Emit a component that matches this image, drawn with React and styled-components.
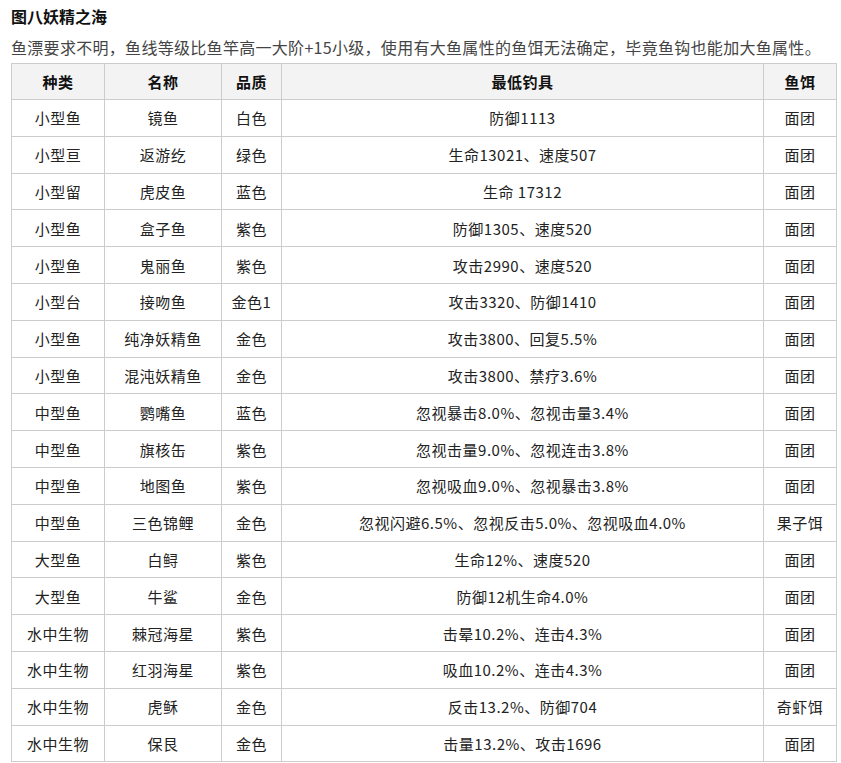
import React from "react";
import styled, { createGlobalStyle } from "styled-components";

const Global = createGlobalStyle`
  body { margin: 0; background: #fff; font-family: "Noto Sans CJK SC", "Noto Sans", sans-serif; color: #222; }
`;
const Wrap = styled.div`padding: 4px 5px 0 11px; width: 826px;`;
const Title = styled.h3`margin: 0; font-size: 16px; font-weight: 700; line-height: 24px; height: 24px; color:#111;`;
const Note = styled.p`margin: 8px 0 5px; font-size: 16px; letter-spacing: 0.3px; line-height: 22px; color: #444; white-space: nowrap;`;
const Table = styled.table`border-collapse: collapse; width: 826px; table-layout: fixed; font-size: 15px; letter-spacing: 0.5px;`;
const Th = styled.th`border: 1px solid #ccc; background: #f3f3f3; height: 35px; padding: 0; font-weight: 700; text-align: center; color:#111;`;
const Td = styled.td`border: 1px solid #ccc; height: 35.8px; padding: 0; text-align: center; white-space: nowrap;`;

const rows = [
  ["小型鱼","镜鱼","白色","防御1113","面团"],
  ["小型亘","返游纥","绿色","生命13021、速度507","面团"],
  ["小型留","虎皮鱼","蓝色","生命 17312","面团"],
  ["小型鱼","盒子鱼","紫色","防御1305、速度520","面团"],
  ["小型鱼","鬼丽鱼","紫色","攻击2990、速度520","面团"],
  ["小型台","接吻鱼","金色1","攻击3320、防御1410","面团"],
  ["小型鱼","纯净妖精鱼","金色","攻击3800、回复5.5%","面团"],
  ["小型鱼","混沌妖精鱼","金色","攻击3800、禁疗3.6%","面团"],
  ["中型鱼","鹦嘴鱼","蓝色","忽视暴击8.0%、忽视击量3.4%","面团"],
  ["中型鱼","旗核缶","紫色","忽视击量9.0%、忽视连击3.8%","面团"],
  ["中型鱼","地图鱼","紫色","忽视吸血9.0%、忽视暴击3.8%","面团"],
  ["中型鱼","三色锦鲤","金色","忽视闪避6.5%、忽视反击5.0%、忽视吸血4.0%","果子饵"],
  ["大型鱼","白鲟","紫色","生命12%、速度520","面团"],
  ["大型鱼","牛鲨","金色","防御12机生命4.0%","面团"],
  ["水中生物","棘冠海星","紫色","击晕10.2%、连击4.3%","面团"],
  ["水中生物","红羽海星","紫色","吸血10.2%、连击4.3%","面团"],
  ["水中生物","虎稣","金色","反击13.2%、防御704","奇虾饵"],
  ["水中生物","保艮","金色","击量13.2%、攻击1696","面团"],
];

export default function App() {
  return (
    <Wrap>
      <Global />
      <Title>图八妖精之海</Title>
      <Note>鱼漂要求不明，鱼线等级比鱼竿高一大阶+15小级，使用有大鱼属性的鱼饵无法确定，毕竟鱼钩也能加大鱼属性。</Note>
      <Table>
        <colgroup>
          <col style={{ width: 93 }} /><col style={{ width: 117 }} /><col style={{ width: 60 }} /><col style={{ width: 482 }} /><col style={{ width: 73 }} />
        </colgroup>
        <thead><tr><Th>种类</Th><Th>名称</Th><Th>品质</Th><Th>最低钓具</Th><Th>鱼饵</Th></tr></thead>
        <tbody>
          {rows.map((r, i) => <tr key={i}>{r.map((c, j) => <Td key={j}>{c}</Td>)}</tr>)}
        </tbody>
      </Table>
    </Wrap>
  );
}
